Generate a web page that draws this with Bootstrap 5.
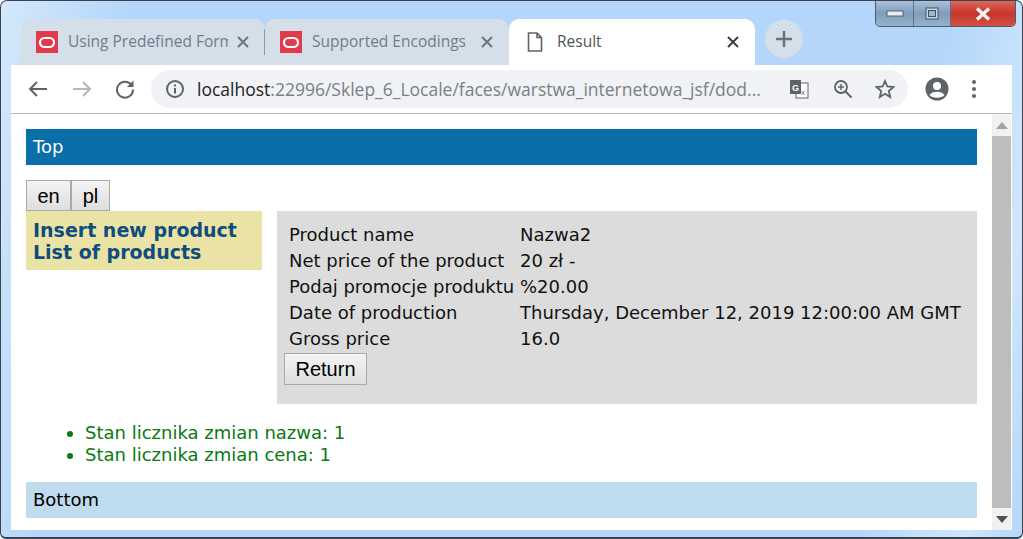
<!DOCTYPE html>
<html lang="en">
<head>
    <meta charset="UTF-8">
    <meta name="viewport" content="width=device-width, initial-scale=1.0">
    <title>Result</title>
    <link rel="stylesheet" href="https://cdn.jsdelivr.net/npm/bootstrap@5.3.0/dist/css/bootstrap.min.css">
    <style>
        html, body { height: 539px; overflow: hidden; }
        body { background: #fff; font-family: "DejaVu Sans", sans-serif; }
        .win-frame { position: relative; width: 1023px; height: 539px; padding: 18px 10px 10px; background: linear-gradient(100deg, #d4e8fb 0, #b3d6fa 12%, #b3d6fa 85%, #d0e6fb 95%, #b3d6fa 100%); border: 1px solid #39424e; border-bottom-width: 2px; border-radius: 7px 7px 6px 6px; box-sizing: border-box; }
        .win-btns { position: absolute; top: 0; right: 6px; height: 26px; width: 141px; border: 1px solid #4d5c6e; border-top: 0; border-radius: 0 0 5px 5px; overflow: hidden; }
        .win-btn { height: 100%; border-right: 1px solid #5d7389; }
        .win-min { width: 38px; background: linear-gradient(#a9c2dc, #7f9cb9 50%, #95b2cd); }
        .win-max { width: 37px; background: linear-gradient(#a9c2dc, #7f9cb9 50%, #95b2cd); }
        .win-close { flex: 1; border: 0; background: linear-gradient(#dc6a5b, #c8352a 50%, #d25045); }
        .tab-strip { height: 46px; padding-left: 10px; font-family: "Open Sans", sans-serif; font-size: 15.5px; }
        .b-tab { width: 244px; height: 46px; padding: 0 15px; border-radius: 10px 10px 0 0; background: #d5dfea; color: #737c86; }
        .b-tab-active { width: 246px; background: #fff; color: #4f5357; padding-left: 18px; }
        .tab-title { flex: 1; margin-left: 10px; white-space: nowrap; overflow: hidden; }
        .tab-sep { width: 1px; height: 26px; background: #8e98a3; margin-left: -1px; align-self: center; }
        .plus-btn { width: 38px; height: 38px; margin: -6px 0 0 10px; border-radius: 50%; background: #d5dfea; }
        .tool-bar { height: 49px; padding: 0 18px 0 16px; background: #fff; border-bottom: 1px solid #b4b6b8; }
        .url-box { width: 757px; height: 38px; margin-left: 16px; padding: 0 13px 0 14px; border-radius: 19px; background: #f0f2f5; font-family: "Open Sans", sans-serif; font-size: 17.5px; color: #7a7f85; white-space: nowrap; }
        .url-text { flex: 1; margin-left: 12px; overflow: hidden; }
        .url-host { color: #222; }
        .page-view { height: 416px; background: #fff; }
        .page-body { flex: 1; padding: 15px 15px 0; font-size: 18px; line-height: 22px; min-width: 0; }
        .top-bar, .bottom-bar { height: 36px; padding: 7px 7px; }
        .top-bar { background: #0a6ea9; color: #fff; }
        .bottom-bar { background: #bedcee; color: #000; margin-top: 16px; }
        .lang-row { margin-top: 15px; height: 31px; }
        .plain-btn { font-family: "Liberation Sans", sans-serif; font-size: 20px; line-height: 20px; height: 31px; padding: 0 10px; color: #000; background: linear-gradient(#f4f4f4, #dedede); border: 1px solid #a9a9a9; border-radius: 0; }
        .lang-row .plain-btn { width: 45px; padding: 0; }
        .lang-row .plain-btn + .plain-btn { width: 39px; margin-left: 0; }
        .side-menu { width: 236px; height: 59px; padding: 8px 7px; background: #ebe3a5; font-weight: 700; font-size: 19px; flex-shrink: 0; }
        .side-menu a { display: block; color: #0e4d7d; text-decoration: none; }
        .detail-box { flex: 1; height: 193px; margin-left: 15px; padding: 11px 7px 0; background: #dcdcdc; color: #111; }
        .detail-row { height: 26px; line-height: 26px; padding-left: 5px; }
        .detail-name { width: 231px; white-space: nowrap; }
        .return-btn { width: 83px; height: 32px; margin-top: 1px; }
        .msg-list { margin: 18px 0 0; padding-left: 59px; color: #0a7a12; list-style: disc; }
        .scroll-bar { width: 19px; background: #f1f1f1; margin-right: 1px; }
        .scroll-arrow { height: 22px; }
        .scroll-thumb { flex: 1; background: #bdbdbd; }
    </style>
    <script defer src="https://cdn.jsdelivr.net/npm/bootstrap@5.3.0/dist/js/bootstrap.bundle.min.js"></script>
</head>
<body>
    <div class="win-frame">
        <!-- window buttons -->
        <div class="win-btns d-flex">
            <div class="win-btn win-min d-flex align-items-center justify-content-center">
                <svg width="18" height="7" viewBox="0 0 18 7"><rect x="1" y="1" width="16" height="5" fill="#e8eef4" stroke="#4f6478"/></svg>
            </div>
            <div class="win-btn win-max d-flex align-items-center justify-content-center">
                <svg width="14" height="13" viewBox="0 0 14 13"><rect x="1" y="1" width="12" height="11" fill="#c9d8e6" stroke="#3f5266"/><rect x="3.5" y="3.5" width="7" height="6" fill="#9db6cc" stroke="#3f5266"/></svg>
            </div>
            <div class="win-btn win-close d-flex align-items-center justify-content-center">
                <svg width="18" height="14" viewBox="0 0 18 14"><path d="M3 1.5 L15 12.5 M15 1.5 L3 12.5" stroke="#f4f4f4" stroke-width="3.4"/></svg>
            </div>
        </div>

        <!-- tabs -->
        <div class="tab-strip d-flex">
            <div class="b-tab d-flex align-items-center">
                <svg width="22" height="22" viewBox="0 0 22 22"><rect width="22" height="22" fill="#e2394c"/><rect x="4" y="7" width="14" height="9" rx="4.5" fill="none" stroke="#fff" stroke-width="2.2"/></svg>
                <span class="tab-title">Using Predefined Form</span>
                <svg class="ms-2" width="14" height="14" viewBox="0 0 14 14"><path d="M2 2 L12 12 M12 2 L2 12" stroke="#6b7480" stroke-width="2"/></svg>
            </div>
            <div class="tab-sep"></div>
            <div class="b-tab d-flex align-items-center">
                <svg width="22" height="22" viewBox="0 0 22 22"><rect width="22" height="22" fill="#e2394c"/><rect x="4" y="7" width="14" height="9" rx="4.5" fill="none" stroke="#fff" stroke-width="2.2"/></svg>
                <span class="tab-title">Supported Encodings</span>
                <svg class="ms-2" width="14" height="14" viewBox="0 0 14 14"><path d="M2 2 L12 12 M12 2 L2 12" stroke="#6b7480" stroke-width="2"/></svg>
            </div>
            <div class="b-tab b-tab-active d-flex align-items-center">
                <svg width="16" height="20" viewBox="0 0 16 20"><path d="M1.5 1 H10 L14.5 5.5 V19 H1.5 Z M10 1 V5.5 H14.5" fill="none" stroke="#5f6368" stroke-width="1.6"/></svg>
                <span class="tab-title" style="margin-left:14px">Result</span>
                <svg class="ms-2" width="14" height="14" viewBox="0 0 14 14"><path d="M2 2 L12 12 M12 2 L2 12" stroke="#3c4043" stroke-width="2"/></svg>
            </div>
            <div class="plus-btn d-flex align-items-center justify-content-center align-self-center">
                <svg width="18" height="18" viewBox="0 0 18 18"><path d="M9 1 V17 M1 9 H17" stroke="#67717c" stroke-width="2.4"/></svg>
            </div>
        </div>

        <!-- address bar -->
        <div class="tool-bar d-flex align-items-center">
            <svg width="22" height="20" viewBox="0 0 22 20" class="me-4"><path d="M20 10 H3 M10 3 L3 10 L10 17" fill="none" stroke="#5f6368" stroke-width="2"/></svg>
            <svg width="22" height="20" viewBox="0 0 22 20" class="me-4" style="margin-left:-2px"><path d="M2 10 H19 M12 3 L19 10 L12 17" fill="none" stroke="#b4b7ba" stroke-width="2"/></svg>
            <svg width="20" height="20" viewBox="0 0 20 20" style="margin-left:-2px"><path d="M16.5 6 A8 8 0 1 0 18 10.500" fill="none" stroke="#5f6368" stroke-width="2"/><path d="M18.500 1.500 V8 H12 Z" fill="#5f6368"/></svg>
            <div class="url-box d-flex align-items-center">
                <svg width="20" height="20" viewBox="0 0 20 20"><circle cx="10" cy="10" r="8" fill="none" stroke="#5f6368" stroke-width="2"/><rect x="9" y="9" width="2" height="5.500" fill="#5f6368"/><rect x="9" y="5.500" width="2" height="2" fill="#5f6368"/></svg>
                <span class="url-text"><span class="url-host">localhost</span>:22996/Sklep_6_Locale/faces/warstwa_internetowa_jsf/dod...</span>
                <svg class="ms-2" width="20" height="20" viewBox="0 0 20 20"><rect x="7" y="4" width="12" height="15" fill="#fff" stroke="#5f6368"/><rect x="1" y="1" width="11" height="14" fill="#5f6368"/><text x="3" y="12" font-size="9" font-weight="700" font-family="Liberation Sans, sans-serif" fill="#fff">G</text><text x="12" y="16" font-size="8" font-family="Liberation Sans, sans-serif" fill="#5f6368">x</text></svg>
                <svg style="margin-left:24px" width="20" height="20" viewBox="0 0 20 20"><circle cx="8" cy="8" r="6" fill="none" stroke="#5f6368" stroke-width="1.800"/><path d="M12.500 12.500 L18.500 18.500" stroke="#5f6368" stroke-width="2"/><path d="M8 5 V11 M5 8 H11" stroke="#5f6368" stroke-width="1.500"/></svg>
                <svg style="margin-left:22px" width="20" height="20" viewBox="0 0 20 20"><path d="M10 2 L12.300 7.500 L18.500 8 L13.800 12 L15.200 18 L10 14.800 L4.800 18 L6.200 12 L1.500 8 L7.700 7.500 Z" fill="none" stroke="#5f6368" stroke-width="1.800"/></svg>
            </div>
            <svg style="margin-left:17px" width="24" height="24" viewBox="0 0 24 24"><circle cx="12" cy="12" r="11.500" fill="#5f6368"/><circle cx="12" cy="9" r="4" fill="#fff"/><path d="M4.500 18 C7 13.500 17 13.500 19.500 18 C17 21.500 7 21.500 4.500 18 Z" fill="#fff"/></svg>
            <svg style="margin-left:22px" width="6" height="20" viewBox="0 0 6 20"><circle cx="3" cy="3" r="2" fill="#5f6368"/><circle cx="3" cy="10" r="2" fill="#5f6368"/><circle cx="3" cy="17" r="2" fill="#5f6368"/></svg>
        </div>

        <!-- page -->
        <div class="page-view d-flex">
            <div class="page-body">
                <div class="top-bar">Top</div>
                <div class="lang-row d-flex">
                    <button class="plain-btn" type="button">en</button>
                    <button class="plain-btn" type="button">pl</button>
                </div>
                <div class="d-flex">
                    <div class="side-menu">
                        <a href="#">Insert new product</a>
                        <a href="#">List of products</a>
                    </div>
                    <div class="detail-box">
                        <div class="detail-row d-flex"><div class="detail-name">Product name</div><div>Nazwa2</div></div>
                        <div class="detail-row d-flex"><div class="detail-name">Net price of the product</div><div>20 zł -</div></div>
                        <div class="detail-row d-flex"><div class="detail-name">Podaj promocje produktu</div><div>%20.00</div></div>
                        <div class="detail-row d-flex"><div class="detail-name">Date of production</div><div>Thursday, December 12, 2019 12:00:00 AM GMT</div></div>
                        <div class="detail-row d-flex"><div class="detail-name">Gross price</div><div>16.0</div></div>
                        <button class="plain-btn return-btn" type="button">Return</button>
                    </div>
                </div>
                <ul class="msg-list">
                    <li>Stan licznika zmian nazwa: 1</li>
                    <li>Stan licznika zmian cena: 1</li>
                </ul>
                <div class="bottom-bar">Bottom</div>
            </div>
            <div class="scroll-bar d-flex flex-column">
                <div class="scroll-arrow d-flex align-items-center justify-content-center">
                    <svg width="12" height="7" viewBox="0 0 12 7"><path d="M6 0 L12 7 H0 Z" fill="#a3a3a3"/></svg>
                </div>
                <div class="scroll-thumb"></div>
                <div class="scroll-arrow d-flex align-items-center justify-content-center">
                    <svg width="12" height="7" viewBox="0 0 12 7"><path d="M0 0 H12 L6 7 Z" fill="#505050"/></svg>
                </div>
            </div>
        </div>
    </div>
</body>
</html>
